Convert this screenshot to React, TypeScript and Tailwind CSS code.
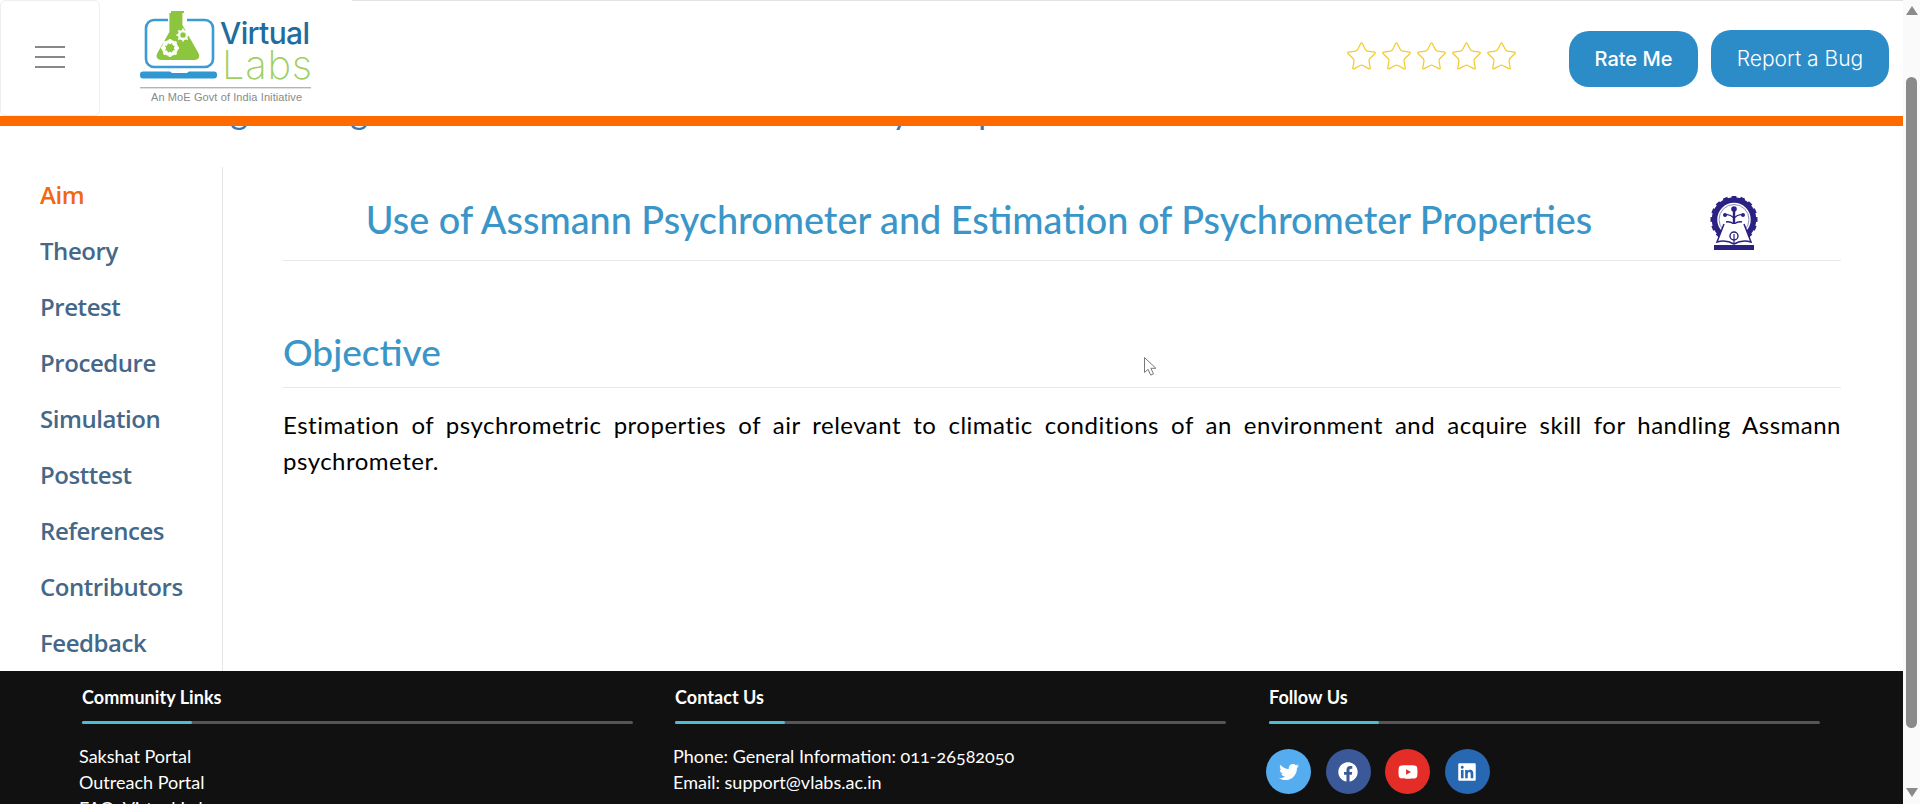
import { Star } from "lucide-react";
import { FaFacebook, FaLinkedin, FaTwitter, FaYoutube } from "react-icons/fa";

const navItems = ["Aim", "Theory", "Pretest", "Procedure", "Simulation", "Posttest", "References", "Contributors", "Feedback"];

const socials = [
  { name: "Twitter", Icon: FaTwitter, bg: "bg-[#55acee]" },
  { name: "Facebook", Icon: FaFacebook, bg: "bg-[#3b5998]" },
  { name: "YouTube", Icon: FaYoutube, bg: "bg-[#e52d27]" },
  { name: "LinkedIn", Icon: FaLinkedin, bg: "bg-[#2867b2]" },
];

function Gear({ cx, cy, r, stroke }: { cx: number; cy: number; r: number; stroke: string }) {
  const teeth = [0, 45, 90, 135];
  return (
    <g>
      {teeth.map((a) => (
        <line
          key={a}
          x1={cx - (r + 2.4) * Math.cos((a * Math.PI) / 180)}
          y1={cy - (r + 2.4) * Math.sin((a * Math.PI) / 180)}
          x2={cx + (r + 2.4) * Math.cos((a * Math.PI) / 180)}
          y2={cy + (r + 2.4) * Math.sin((a * Math.PI) / 180)}
          stroke={stroke}
          strokeWidth={r / 2.6}
        />
      ))}
      <circle cx={cx} cy={cy} r={r} fill="none" stroke={stroke} strokeWidth={r / 2.2} />
      <circle cx={cx} cy={cy} r={r * 0.62} fill="#8cc63f" />
    </g>
  );
}

function VlabsLogo() {
  return (
    <svg width="200" height="110" viewBox="130 0 200 110" className="shrink-0">
      <path d="M168 20H154a8 8 0 0 0-8 8v31a8 8 0 0 0 8 8h51a8 8 0 0 0 8-8V28a8 8 0 0 0-8-8H187" fill="none" stroke="#3a9bd5" strokeWidth="2.6" />
      <path d="M140 74.5a3 3 0 0 1 3-3h27l2 1.5h15l2-1.5h25a3 3 0 0 1 3 3v1a3 3 0 0 1-3 3H143a3 3 0 0 1-3-3z" fill="#2f97d1" />
      <path d="M171 11h13v2h-1.6v12l16 28c2 4 0 7-4 7h-33c-4 0-6-3-4-7l12-21V13H171z" fill="#8cc63f" />
      <Gear cx={170} cy={48} r={6.6} stroke="#fff" />
      <Gear cx={183} cy={35} r={4.2} stroke="#fff" />
      <text x="220" y="44" fontFamily="Inter, sans-serif" fontSize="30" fontWeight="500" fill="#1f6c9d" textLength="90">Virtual</text>
      <text x="222" y="79" fontFamily="Inter, sans-serif" fontSize="40" fontWeight="200" fill="#9fcf63" textLength="90">Labs</text>
      <rect x="140" y="87" width="171" height="1.4" fill="#b5b5b5" />
      <text x="151" y="101" fontFamily="'Liberation Sans', sans-serif" fontSize="11" fill="#8a8a8a" textLength="151">An MoE Govt of India Initiative</text>
    </svg>
  );
}

function IitLogo() {
  const teeth = Array.from({ length: 16 }, (_, i) => (i * 360) / 16);
  return (
    <svg width="48" height="54" viewBox="0 0 48 54" className="shrink-0">
      {teeth.map((a) => (
        <rect key={a} x="21.6" y="0" width="4.8" height="5" fill="#2a2182" transform={`rotate(${a} 24 23.5)`} />
      ))}
      <circle cx="24" cy="23.5" r="19.5" fill="none" stroke="#2a2182" strokeWidth="5.5" />
      <circle cx="24" cy="23.5" r="15" fill="none" stroke="#8f8bc0" strokeWidth="1" />
      <path d="M24 12v28" stroke="#2a2182" strokeWidth="2.4" />
      <path d="M24 22c-3-3-6-4-9-3M24 22c3-3 6-4 9-3M24 28c-3-2-5-3-8-2M24 28c3-2 5-3 8-2" stroke="#2a2182" strokeWidth="1.4" fill="none" />
      <circle cx="24" cy="13" r="2.8" fill="#2a2182" />
      <circle cx="15" cy="19" r="2" fill="#2a2182" />
      <circle cx="33" cy="19" r="2" fill="#2a2182" />
      <path d="M14 28L7 46c6-2 12-1 17 2 5-3 11-4 17-2l-7-18" fill="#fff" stroke="#2a2182" strokeWidth="1.5" />
      <path d="M24 38v10" stroke="#2a2182" strokeWidth="1.2" />
      <circle cx="24" cy="40" r="4" fill="none" stroke="#2a2182" strokeWidth="1.4" />
      <rect x="4" y="49" width="40" height="5" fill="#2a2182" />
    </svg>
  );
}

function FooterHeading({ title }: { title: string }) {
  return (
    <div>
      <h3 className="pt-[1px] text-[18px] leading-[26px] font-bold tracking-[0.05px] text-white">{title}</h3>
      <div className="mt-[11px] flex h-[3px] w-[551px] rounded-full bg-[#555]">
        <div className="h-full w-[110px] rounded-full bg-[#4dbdd3]" />
      </div>
    </div>
  );
}

export default function App() {
  return (
    <div className="relative flex h-screen w-full overflow-hidden bg-white font-['Lato',sans-serif]">
      <div className="flex h-full w-[1903px] shrink-0 flex-col">
        <header className="flex h-[116px] shrink-0 bg-white">
          <button aria-label="Menu" className="flex h-[116px] w-[100px] shrink-0 flex-col items-center justify-center gap-2 rounded-md border border-[#eeeeee] pb-[2px]">
            <span className="h-[2px] w-[30px] bg-[#888]" />
            <span className="h-[2px] w-[30px] bg-[#888]" />
            <span className="h-[2px] w-[30px] bg-[#888]" />
          </button>
          <div className="w-[252px] shrink-0 pl-[30px]">
            <VlabsLogo />
          </div>
          <div className="flex min-w-0 flex-1 items-center border-t border-[#e2e2e2]">
            <div className="ml-auto -mt-[4px] flex items-center gap-[2px]">
              {[1, 2, 3, 4, 5].map((n) => (
                <Star key={n} size={33} strokeWidth={0.9} className="text-[#f2cb30]" />
              ))}
            </div>
            <a className="ml-[51px] flex h-[56px] w-[129px] items-center justify-center rounded-[20px] bg-[#2b8cc8] font-['Inter',sans-serif] text-[20px] font-medium text-white">
              Rate Me
            </a>
            <a className="ml-[13px] mr-[14px] flex h-[57px] w-[178px] items-center justify-center rounded-[20px] bg-[#2b8cc8] font-['Inter',sans-serif] text-[21px] font-light text-white">
              Report a Bug
            </a>
          </div>
        </header>
        <div className="h-[10px] shrink-0 bg-[#ff6a00]" />

        <div className="h-[41px] shrink-0">
          <div className="flex h-[8px] overflow-hidden pl-[192px] text-[34px] leading-[8px] text-[#3f74ab]">
            <span className="-translate-y-[19px]">Engineering</span>
            <span className="ml-[486px] -translate-y-[19px]">Dry Temp</span>
          </div>
        </div>

        <div className="flex min-h-0 flex-1">
          <nav className="h-full w-[223px] shrink-0 border-r border-[#e6e6e6] pl-[40px] font-['Open_Sans',sans-serif] text-[24px] font-semibold tracking-[-0.45px] text-[#456788]">
            <ul>
              {navItems.map((item) => (
                <li key={item} className={`flex h-[56px] items-center ${item === "Aim" ? "text-[#f2670f]" : ""}`}>
                  {item}
                </li>
              ))}
            </ul>
          </nav>

          <main className="ml-[60px] w-[1558px]">
            <div className="flex h-[94px] items-center border-b border-[#e9e9e9] pt-[14px]">
              <h1 className="w-[1392px] text-center text-[37.8px] font-medium text-[#3a96c8]">
                Use of Assmann Psychrometer and Estimation of Psychrometer Properties
              </h1>
              <div className="ml-[35px] mt-[5px]">
                <IitLogo />
              </div>
            </div>
            <h2 className="mt-[66px] h-[61px] border-b border-[#e9e9e9] text-[37px] leading-[50px] font-medium text-[#3a96c8]">
              Objective
            </h2>
            <p className="mt-[19px] text-justify text-[24px] leading-[36px] tracking-[0.5px] text-black">
              Estimation of psychrometric properties of air relevant to climatic conditions of an environment and acquire skill for handling Assmann psychrometer.
            </p>
          </main>
        </div>

        <footer className="grid h-[133px] shrink-0 grid-cols-[593px_594px_551px] overflow-hidden bg-[#111111] pl-[82px] pt-[12px] text-white">
          <div>
            <FooterHeading title="Community Links" />
            <ul className="-ml-[3px] mt-[19px] text-[18px] leading-[26px]">
              <li>Sakshat Portal</li>
              <li>Outreach Portal</li>
              <li>FAQ: Virtual Labs</li>
            </ul>
          </div>
          <div>
            <FooterHeading title="Contact Us" />
            <ul className="-ml-[2px] mt-[19px] text-[18px] leading-[26px]">
              <li className="oldstyle-nums">Phone: General Information: 011-26582050</li>
              <li>Email: support@vlabs.ac.in</li>
            </ul>
          </div>
          <div>
            <FooterHeading title="Follow Us" />
            <div className="-ml-[3px] mt-[25px] flex gap-[14.5px]">
              {socials.map(({ name, Icon, bg }) => (
                <a key={name} aria-label={name} className={`flex h-[45px] w-[45px] items-center justify-center rounded-full text-[20px] text-white ${bg}`}>
                  <Icon />
                </a>
              ))}
            </div>
          </div>
        </footer>
      </div>

      <div className="flex h-full w-[17px] shrink-0 flex-col items-center bg-[#fafafa] pt-[6px] pb-[7px]">
        <div className="h-0 w-0 border-x-[6px] border-b-[9px] border-x-transparent border-b-[#8a8a8a]" />
        <div className="mt-[62px] h-[651px] w-[11px] rounded-full bg-[#8a8a8a]" />
        <div className="mt-auto h-0 w-0 border-x-[6px] border-t-[9px] border-x-transparent border-t-[#8a8a8a]" />
      </div>

      {/* mouse pointer caught in the capture */}
      <svg width="14" height="19" viewBox="0 0 14 19" className="absolute left-[1144px] top-[357px]">
        <path d="M.5.5v15l3.6-3.2 2.6 5.8 2.8-1.2-2.6-5.6h5z" fill="#fff" stroke="#77777f" strokeWidth="1" />
      </svg>
    </div>
  );
}
